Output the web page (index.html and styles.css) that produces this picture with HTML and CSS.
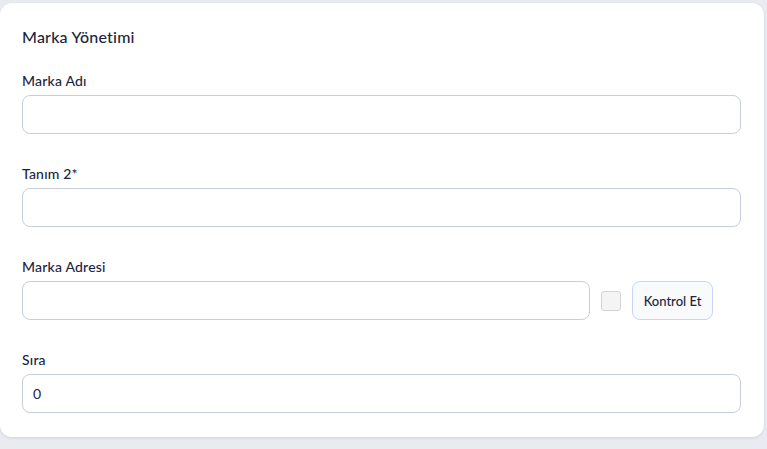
FILE: index.html
```html
<html>
<head>
    <link rel="stylesheet" href="styles.css">
</head>
<body>
<div class="card">
    <div class="card-title">Marka Yönetimi</div>
    <div class="field">
        <label class="field-label">Marka Adı</label>
        <input class="field-input" type="text">
    </div>
    <div class="field">
        <label class="field-label">Tanım 2*</label>
        <input class="field-input" type="text">
    </div>
    <div class="field">
        <label class="field-label">Marka Adresi</label>
        <div class="field-row">
            <input class="field-input" type="text">
            <span class="check"></span>
            <button class="check-btn">Kontrol Et</button>
        </div>
    </div>
    <div class="field field-last">
        <label class="field-label">Sıra</label>
        <input class="field-input" type="text" value="0">
    </div>
</div>
</body>
</html>
```

FILE: styles.css
```css
body {
    margin: 0;
    background: #e9ebf1;
    font-family: Lato, "Open Sans", sans-serif;
    color: #1b2540;
}
.card {
    margin-top: 3px;
    width: 764px;
    box-sizing: border-box;
    background: #fff;
    border-radius: 12px;
    box-shadow: 0 1px 3px rgba(40, 50, 80, 0.12);
    padding: 24px 23px 24px 22px;
}
.card-title {
    font-size: 16px;
    line-height: 20px;
    font-weight: 500;
    letter-spacing: 0.2px;
    margin-bottom: 26px;
}
.field {
    display: flex;
    flex-direction: column;
    margin-bottom: 32px;
}
.field-last {
    margin-bottom: 0;
}
.field-label {
    font-size: 14px;
    line-height: 16px;
    font-weight: 500;
    letter-spacing: 0.2px;
    margin-bottom: 6px;
}
.field-input {
    height: 39px;
    box-sizing: border-box;
    border: 1px solid #c8cedb;
    border-radius: 8px;
    padding: 0 10px;
    font-family: inherit;
    font-size: 14px;
    color: #1b2540;
    outline: none;
}
.field-row {
    display: flex;
    align-items: center;
    gap: 11px;
    padding-right: 28px;
}
.field-row .field-input {
    flex: 1;
}
.check {
    width: 20px;
    height: 20px;
    box-sizing: border-box;
    border: 1px solid #d2d4d8;
    border-radius: 3px;
    background: #f4f4f5;
}
.check-btn {
    width: 81px;
    height: 39px;
    border: 1px solid #c6d5f7;
    border-radius: 8px;
    background: #f8fafc;
    font-family: inherit;
    font-size: 13px;
    font-weight: 500;
    color: #1b2540;
    padding: 0;
}
```
